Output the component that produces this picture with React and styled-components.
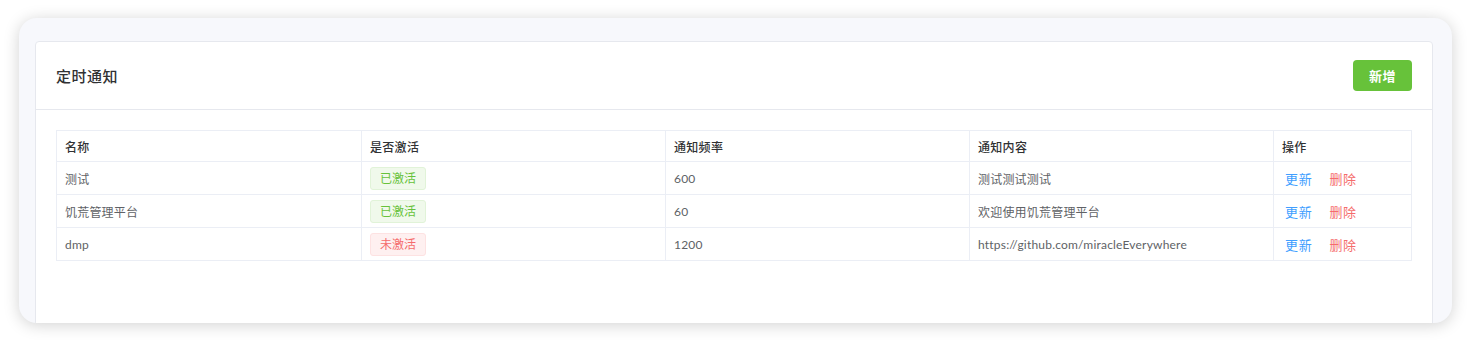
import React from "react";
import styled, { createGlobalStyle } from "styled-components";

const Global = createGlobalStyle`
  html, body { margin: 0; padding: 0; background: #ffffff; }
  body { font-family: Lato, "Noto Sans CJK SC", sans-serif; }
`;

const Page = styled.div`
  padding: 18px 18px 19px 19px;
  height: 342px;
  box-sizing: border-box;
`;

const Frame = styled.div`
  height: 305px;
  background: #f7f8fc;
  border-radius: 18px;
  box-shadow: 0 2px 16px rgba(0, 0, 0, 0.18);
  overflow: hidden;
  padding: 23px 19px 0 16px;
  box-sizing: border-box;
`;

const Card = styled.div`
  background: #fff;
  border: 1px solid #e6e8ee;
  border-radius: 4px;
  height: 320px;
  box-sizing: border-box;
`;

const CardHeader = styled.div`
  display: flex;
  align-items: center;
  justify-content: space-between;
  height: 68px;
  padding: 0 20px;
  border-bottom: 1px solid #e6e8ee;
  box-sizing: border-box;
`;

const Title = styled.div`
  font-size: 15px;
  font-weight: 500;
  color: #303133;
  letter-spacing: 0.5px;
`;

const AddButton = styled.button`
  width: 59px;
  height: 31px;
  border: none;
  border-radius: 4px;
  background: #67c23a;
  color: #fff;
  font-family: inherit;
  font-size: 13px;
  font-weight: 600;
  letter-spacing: 0.5px;
  cursor: pointer;
`;

const CardBody = styled.div`
  padding: 20px;
`;

const Table = styled.table`
  width: 100%;
  border-collapse: collapse;
  table-layout: fixed;
  font-size: 12px;
`;

const Th = styled.th`
  text-align: left;
  font-weight: 500;
  color: #303133;
  height: 30px;
  padding: 0 8px;
  border: 1px solid #ebeef5;
  letter-spacing: 0.3px;
`;

const Td = styled.td`
  color: #606266;
  height: 32px;
  padding: 0 8px;
  border: 1px solid #ebeef5;
  letter-spacing: 0.2px;
`;

const Tag = styled.span`
  display: inline-block;
  height: 23px;
  line-height: 21px;
  padding: 0 9px;
  box-sizing: border-box;
  border-radius: 3px;
  font-size: 12px;
  letter-spacing: 0;
  border: 1px solid ${(p) => (p.$active ? "#e1f3d8" : "#fde2e2")};
  background: ${(p) => (p.$active ? "#f0f9eb" : "#fef0f0")};
  color: ${(p) => (p.$active ? "#67c23a" : "#f56c6c")};
`;

const Actions = styled.div`
  display: flex;
  gap: 17px;
  padding-left: 3px;
`;

const LinkBtn = styled.span`
  font-size: 13px;
  color: ${(p) => (p.$danger ? "#f56c6c" : "#409eff")};
  cursor: pointer;
  letter-spacing: 0.7px;
`;

const rows = [
  { name: "测试", active: true, freq: "600", content: "测试测试测试" },
  { name: "饥荒管理平台", active: true, freq: "60", content: "欢迎使用饥荒管理平台" },
  { name: "dmp", active: false, freq: "1200", content: "https://github.com/miracleEverywhere" },
];

export default function App() {
  return (
    <>
      <Global />
      <Page>
        <Frame>
          <Card>
            <CardHeader>
              <Title>定时通知</Title>
              <AddButton>新增</AddButton>
            </CardHeader>
            <CardBody>
              <Table>
                <colgroup>
                  <col style={{ width: "305px" }} />
                  <col style={{ width: "304px" }} />
                  <col style={{ width: "304px" }} />
                  <col style={{ width: "304px" }} />
                  <col />
                </colgroup>
                <thead>
                  <tr>
                    <Th>名称</Th>
                    <Th>是否激活</Th>
                    <Th>通知频率</Th>
                    <Th>通知内容</Th>
                    <Th>操作</Th>
                  </tr>
                </thead>
                <tbody>
                  {rows.map((r) => (
                    <tr key={r.name}>
                      <Td>{r.name}</Td>
                      <Td>
                        <Tag $active={r.active}>{r.active ? "已激活" : "未激活"}</Tag>
                      </Td>
                      <Td>{r.freq}</Td>
                      <Td>{r.content}</Td>
                      <Td>
                        <Actions>
                          <LinkBtn>更新</LinkBtn>
                          <LinkBtn $danger>删除</LinkBtn>
                        </Actions>
                      </Td>
                    </tr>
                  ))}
                </tbody>
              </Table>
            </CardBody>
          </Card>
        </Frame>
      </Page>
    </>
  );
}
